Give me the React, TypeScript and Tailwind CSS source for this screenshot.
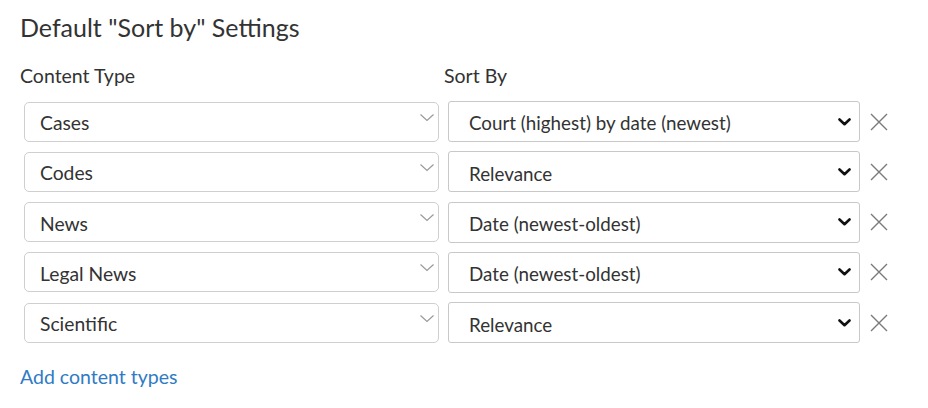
import React from "react";

const rows = [
  { type: "Cases", sort: "Court (highest) by date (newest)" },
  { type: "Codes", sort: "Relevance" },
  { type: "News", sort: "Date (newest-oldest)" },
  { type: "Legal News", sort: "Date (newest-oldest)" },
  { type: "Scientific", sort: "Relevance" },
];

export default function App() {
  return (
    <div
      className="w-[928px] h-[408px] bg-white text-[#333] pl-[20px] pt-[11px]"
      style={{ fontFamily: "Lato, 'Open Sans', sans-serif" }}
    >
      <h2 className="text-[25px] leading-[32px] text-[#333]">Default "Sort by" Settings</h2>
      <div className="flex mt-[20px] text-[19.5px] leading-[26px]">
        <div className="w-[424px]">Content Type</div>
        <div>Sort By</div>
      </div>
      <div className="mt-[12px] flex flex-col gap-[9.3px]">
        {rows.map((r) => (
          <div key={r.type} className="flex items-center h-[41px]">
            <div className="w-[424px] pl-[4px]">
              <div className="w-[415px] h-[40px] border border-[#cfcfcf] rounded-[5px] flex items-center justify-between pl-[15px] pr-[3px] text-[19.3px]">
                <span className="pt-[4px]">{r.type}</span>
                <svg width="16" height="10" viewBox="0 0 16 10" className="mb-[8px]">
                  <path d="M1.5 1.5 L8 7.5 L14.5 1.5" fill="none" stroke="#9a9a9a" strokeWidth="1.2" />
                </svg>
              </div>
            </div>
            <div className="pl-[4px]">
              <div className="w-[412px] h-[41px] border border-[#c8c8c8] rounded-[3px] flex items-center justify-between pl-[20px] pr-[8px] text-[18.8px]">
                <span className="pt-[4px]">{r.sort}</span>
                <svg width="13" height="8" viewBox="0 0 13 8">
                  <path d="M1.5 1.5 L6.5 6.2 L11.5 1.5" fill="none" stroke="#111" strokeWidth="2.6" strokeLinecap="round" strokeLinejoin="round" />
                </svg>
              </div>
            </div>
            <svg width="20" height="20" viewBox="0 0 20 20" className="ml-[9px]">
              <path d="M2 2 L18 18 M18 2 L2 18" stroke="#7a7a7a" strokeWidth="1.4" />
            </svg>
          </div>
        ))}
      </div>
      <div className="mt-[21px] text-[19.5px] leading-[26px] text-[#2f7bc4]">Add content types</div>
    </div>
  );
}
